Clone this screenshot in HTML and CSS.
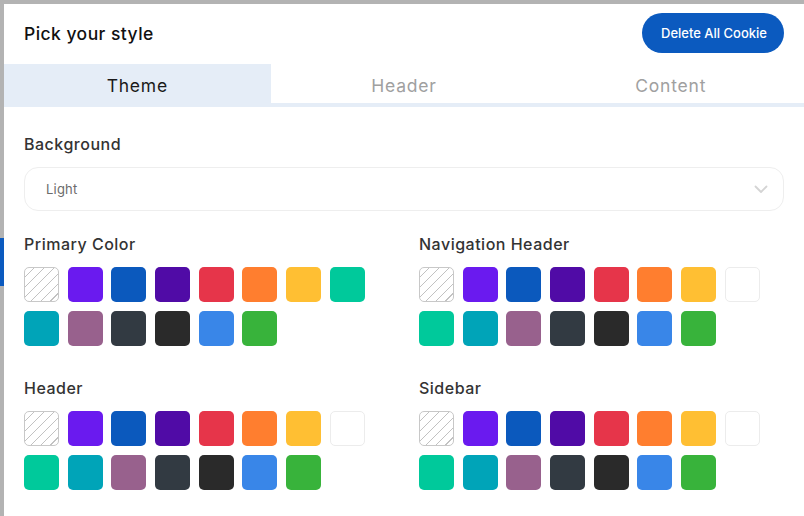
FILE: index.html
```html
<!DOCTYPE html>
<html>
<head>
<meta charset="utf-8">
<link rel="stylesheet" href="styles.css">
</head>
<body>
<div class="panel">
  <div class="panel-head">
    <h2 class="title">Pick your style</h2>
    <button class="btn-delete">Delete All Cookie</button>
  </div>
  <div class="tabs">
    <div class="tab active">Theme</div>
    <div class="tab">Header</div>
    <div class="tab">Content</div>
  </div>
  <div class="body">
    <div class="section">
      <div class="label">Background</div>
      <div class="select">
        <span class="select-value">Light</span>
        <svg class="chev" width="14" height="9" viewBox="0 0 14 9"><path d="M1.5 1.5 L7 7 L12.5 1.5" fill="none" stroke="#d4d4d4" stroke-width="1.8" stroke-linecap="round" stroke-linejoin="round"/></svg>
      </div>
    </div>
    <div class="cols">
      <div class="section">
        <div class="label">Primary Color</div>
        <div class="swatches">
          <span class="sw none"></span><span class="sw c1"></span><span class="sw c2"></span><span class="sw c3"></span><span class="sw c4"></span><span class="sw c5"></span><span class="sw c6"></span><span class="sw c8"></span>
          <span class="sw c9"></span><span class="sw c10"></span><span class="sw c11"></span><span class="sw c12"></span><span class="sw c13"></span><span class="sw c14"></span>
        </div>
      </div>
      <div class="section">
        <div class="label">Navigation Header</div>
        <div class="swatches">
          <span class="sw none"></span><span class="sw c1"></span><span class="sw c2"></span><span class="sw c3"></span><span class="sw c4"></span><span class="sw c5"></span><span class="sw c6"></span><span class="sw c7"></span>
          <span class="sw c8"></span><span class="sw c9"></span><span class="sw c10"></span><span class="sw c11"></span><span class="sw c12"></span><span class="sw c13"></span><span class="sw c14"></span>
        </div>
      </div>
      <div class="section">
        <div class="label">Header</div>
        <div class="swatches">
          <span class="sw none"></span><span class="sw c1"></span><span class="sw c2"></span><span class="sw c3"></span><span class="sw c4"></span><span class="sw c5"></span><span class="sw c6"></span><span class="sw c7"></span>
          <span class="sw c8"></span><span class="sw c9"></span><span class="sw c10"></span><span class="sw c11"></span><span class="sw c12"></span><span class="sw c13"></span><span class="sw c14"></span>
        </div>
      </div>
      <div class="section">
        <div class="label">Sidebar</div>
        <div class="swatches">
          <span class="sw none"></span><span class="sw c1"></span><span class="sw c2"></span><span class="sw c3"></span><span class="sw c4"></span><span class="sw c5"></span><span class="sw c6"></span><span class="sw c7"></span>
          <span class="sw c8"></span><span class="sw c9"></span><span class="sw c10"></span><span class="sw c11"></span><span class="sw c12"></span><span class="sw c13"></span><span class="sw c14"></span>
        </div>
      </div>
    </div>
  </div>
</div>
</body>
</html>
```

FILE: styles.css
```css
* { box-sizing: border-box; }
html, body { height: 100%; }
body {
  margin: 0;
  overflow: hidden;
  font-family: "Inter", "Open Sans", sans-serif;
  background: linear-gradient(#0b5abf, #0b5abf) 0 238px / 4px 48px no-repeat, #b3b3b3;
}
.panel {
  margin: 4px 0 0 4px;
  background: #fff;
  height: calc(100% - 4px);
}
.panel-head {
  height: 60px;
  display: flex;
  align-items: center;
  justify-content: space-between;
  padding: 0 20px;
}
.title {
  margin: 0;
  font-size: 17.5px;
  font-weight: 500;
  color: #111;
  letter-spacing: 0.45px;
  margin-top: -2px;
}
.btn-delete {
  height: 40px;
  padding: 0 17px 0 19px;
  border: 0;
  border-radius: 20px;
  background: #0b5abf;
  color: #fff;
  font-family: inherit;
  font-size: 13px;
  font-weight: 500;
  margin-top: -2px;
}
.tabs {
  display: grid;
  grid-template-columns: 1fr 1fr 1fr;
  border-bottom: 4px solid #e5edf7;
}
.tab {
  height: 39px;
  display: flex;
  align-items: center;
  justify-content: center;
  font-size: 17.5px;
  letter-spacing: 0.8px;
  color: #a0a0a0;
  padding-top: 4px;
}
.tab.active {
  background: #e5edf7;
  color: #1a1a1a;
}
.body {
  padding: 26px 20px 0;
}
.section { margin-bottom: 22px; }
.label {
  font-size: 16px;
  line-height: 22px;
  font-weight: 500;
  color: #333;
  letter-spacing: 0.5px;
  margin-bottom: 12px;
}
.select {
  height: 44px;
  border: 1px solid #eeeeee;
  border-radius: 14px;
  display: flex;
  align-items: center;
  justify-content: space-between;
  padding: 0 15px 0 21px;
}
.select-value {
  font-size: 13px;
  letter-spacing: 0.2px;
  color: #6b6b6b;
}
.cols {
  display: grid;
  grid-template-columns: 1fr 1fr;
  column-gap: 30px;
}
.swatches {
  display: flex;
  flex-wrap: wrap;
  column-gap: 8.7px;
  row-gap: 9px;
  width: 345px;
  padding-bottom: 9px;
}
.sw {
  width: 35px;
  height: 35px;
  border-radius: 5px;
  display: block;
}
.sw.none {
  border: 1px solid #c8c8c8;
  background: repeating-linear-gradient(135deg, #fff 0 6px, #c2c2c2 6px 7px);
}
.c1 { background: #6a1aef; }
.c2 { background: #0b59bd; }
.c3 { background: #500ba6; }
.c4 { background: #e6354a; }
.c5 { background: #ff7e2f; }
.c6 { background: #ffbf33; }
.c7 { background: #fff; border: 1px solid #ececec; }
.c8 { background: #00c99b; }
.c9 { background: #00a4b8; }
.c10 { background: #98618d; }
.c11 { background: #323a42; }
.c12 { background: #2a2a2a; }
.c13 { background: #3986e8; }
.c14 { background: #38b33b; }
```
